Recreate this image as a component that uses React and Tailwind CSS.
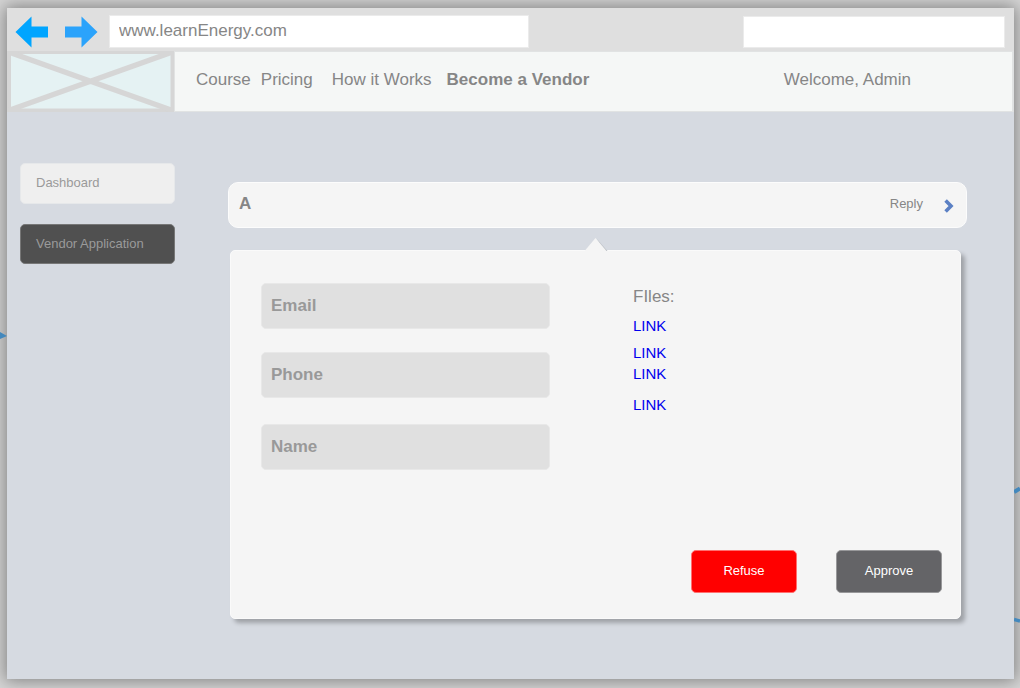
import React from "react";

function ToolbarArrow({ label, flipped, className }) {
  return (
    <button type="button" aria-label={label} className={className}>
      <svg width="34" height="32" viewBox="0 0 34 32" fill="currentColor" aria-hidden="true">
        <path
          d="M0.5 16 L16.5 0.5 V10.5 H33 V21.5 H16.5 V31.5 Z"
          transform={flipped ? "translate(34 0) scale(-1 1)" : undefined}
        />
      </svg>
    </button>
  );
}

function Toolbar() {
  return (
    <div className="flex h-[43px] items-center bg-[#dfdfdf] pr-[9px] pl-2">
      <ToolbarArrow label="Back" className="mt-1 text-[#00a5ff]" />
      <ToolbarArrow label="Forward" flipped className="mt-1 ml-[15px] text-[#2ba3fb]" />
      <input
        type="text"
        aria-label="Address"
        defaultValue="www.learnEnergy.com"
        className="mt-1 ml-[11px] h-[33px] w-[420px] border border-[#ebebeb] bg-white px-[9px] pb-0.5 text-[17px] text-[#868686] outline-none"
      />
      <input
        type="search"
        aria-label="Search"
        className="mt-1 ml-auto h-8 w-[262px] border border-[#ebebeb] bg-white px-2 text-[17px] text-[#868686] outline-none"
      />
    </div>
  );
}

function LogoPlaceholder() {
  return (
    <svg width="167" height="61" viewBox="0 0 167 61" role="img" aria-label="Logo" className="shrink-0">
      <rect width="167" height="61" fill="#d6d6d6" />
      <rect x="4" y="3" width="159.5" height="54.5" fill="#e5f2f3" />
      <path d="M0 0.4 L167 60 M167 0.4 L0 60" stroke="#d6d6d6" strokeWidth="5.4" />
    </svg>
  );
}

function Header() {
  return (
    <header className="flex h-[61px] bg-[#dfe1e2] pr-px">
      <LogoPlaceholder />
      <div className="flex flex-1 items-center border border-[#e1e3e3] bg-[#f5f7f6] pr-[101px] pb-1 pl-[21px] text-[17px] text-[#868686]">
        <nav className="flex">
          <a href="#course">Course</a>
          <a href="#pricing" className="ml-2.5">Pricing</a>
          <a href="#how" className="ml-[19px]">How it Works</a>
          <a href="#vendor" className="ml-[15px] font-bold">Become a Vendor</a>
        </nav>
        <span className="ml-auto">Welcome, Admin</span>
      </div>
    </header>
  );
}

function Sidebar() {
  return (
    <nav className="flex w-[155px] shrink-0 flex-col gap-5 pt-[51px] text-[13px]">
      <a href="#dashboard" className="flex h-[41px] items-center rounded-[5px] border border-[#e6e8ea] bg-[#efefef] px-[15px] pb-0.5 text-[#9a9a9a]">
        Dashboard
      </a>
      <a href="#applications" aria-current="page" className="flex h-10 items-center rounded-[5px] border border-[#777] bg-[#505050] px-[15px] text-[#9a9a9a]">
        Vendor Application
      </a>
    </nav>
  );
}

function Field({ label, type, className = "" }) {
  return (
    <input
      type={type}
      aria-label={label}
      placeholder={label}
      className={`h-[46px] w-full rounded-[5px] border border-[#e8e8e8] bg-[#e0e0e0] px-[9px] text-[17px] font-bold text-[#999] outline-none placeholder:text-[#999] placeholder:opacity-100 ${className}`}
    />
  );
}

function DetailPanel() {
  return (
    <section className="relative mt-[22px] mr-1.5 ml-0.5 flex flex-1 flex-col rounded-[5px] border border-[#fafafa] bg-[#f5f5f5] pt-8 pr-[18px] pb-[25px] pl-[30px] shadow-[4px_4px_4px_rgba(0,0,0,0.26)]">
      <svg width="24" height="14" viewBox="0 0 24 14" className="absolute -top-[14px] left-[353px]" aria-hidden="true">
        <path d="M13 2 L23.5 14 H19 Z" fill="#bfc3c8" />
        <path d="M1 13.5 L11.5 1 L22 13.5 V14 H1 Z" fill="#f5f5f5" />
      </svg>
      <div className="flex">
        <form className="w-[289px]">
          <Field label="Email" type="email" />
          <Field label="Phone" type="tel" className="mt-[23px]" />
          <Field label="Name" type="text" className="mt-[26px]" />
        </form>
        <div className="ml-[83px] flex flex-col items-start pt-1 text-[15px] leading-5 text-[#0000ee]">
          <h2 className="text-[17px] leading-5 text-[#868686]">FIles:</h2>
          <a href="#file-1" className="mt-[9px]">LINK</a>
          <a href="#file-2" className="mt-[7px]">LINK</a>
          <a href="#file-3" className="mt-px">LINK</a>
          <a href="#file-4" className="mt-[11px]">LINK</a>
        </div>
      </div>
      <div className="mt-auto flex justify-end gap-[39px] text-[13px] text-white">
        <button type="button" className="h-[43px] w-[106px] rounded-[5px] border border-[#ff7070] bg-[#ff0000] pb-0.5">
          Refuse
        </button>
        <button type="button" className="h-[43px] w-[106px] rounded-[5px] border border-[#98989a] bg-[#646467] pb-0.5">
          Approve
        </button>
      </div>
    </section>
  );
}

export default function App() {
  return (
    <div className="relative flex min-h-screen overflow-hidden bg-[#d6d6d6] pt-2 pr-1.5 pb-[9px] pl-[7px] font-['Liberation_Sans',Arial,sans-serif]">
      <div className="flex flex-1 flex-col bg-[#d6dae1] shadow-[0_0_16px_2px_rgba(0,0,0,0.4)]">
        <Toolbar />
        <Header />
        <div className="flex flex-1 pr-[47px] pl-[13px]">
          <Sidebar />
          <main className="ml-[53px] flex flex-1 flex-col pt-[70px] pb-[60px]">
            <div className="flex h-[46px] items-center rounded-[10px] border border-[#fcfcfc] bg-[#f5f5f5] pr-3 pb-0.5 pl-2.5">
              <span className="text-[17px] font-bold text-[#868686]">A</span>
              <a href="#reply" className="ml-auto text-[13px] text-[#868686]">Reply</a>
              <svg width="10" height="14" viewBox="0 0 10 14" className="mt-1 ml-[21px]" aria-hidden="true">
                <path d="M1.6 1.6 L7 7 L1.6 12.4" fill="none" stroke="#5b80c4" strokeWidth="3.6" />
              </svg>
            </div>
            <DetailPanel />
          </main>
        </div>
      </div>
      <svg width="7" height="8" viewBox="0 0 7 8" className="absolute top-[332px] left-0" aria-hidden="true">
        <path d="M0 0 L7 4 L0 7 Z" fill="#4388bd" />
      </svg>
      <svg width="6" height="10" viewBox="0 0 6 10" className="absolute top-[485px] right-0" aria-hidden="true">
        <path d="M0 7 L6 3.5" stroke="#4388bd" strokeWidth="4" />
      </svg>
      <svg width="6" height="8" viewBox="0 0 6 8" className="absolute top-[616px] right-0" aria-hidden="true">
        <path d="M0 3.5 L6 5" stroke="#4388bd" strokeWidth="3.5" />
      </svg>
    </div>
  );
}
